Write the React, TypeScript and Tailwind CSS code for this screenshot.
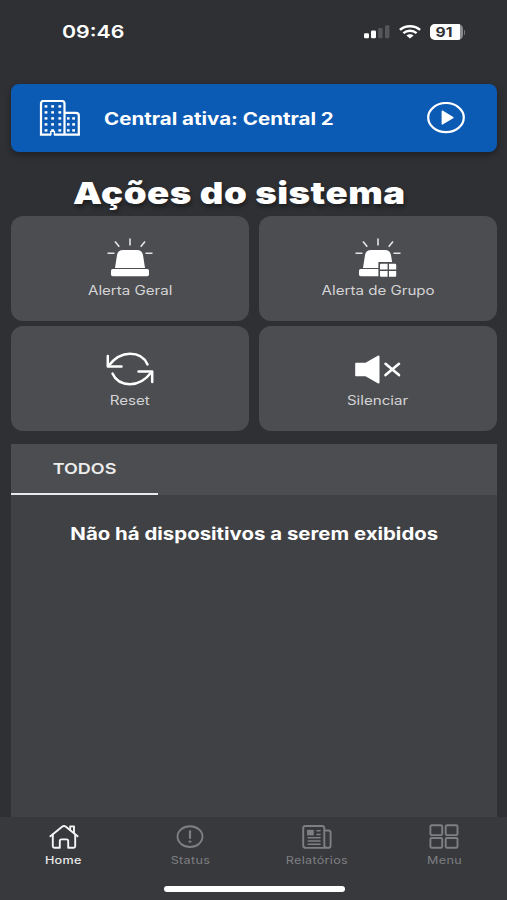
import type { ReactNode } from "react"

type LabelProps = {
    children: ReactNode
    className?: string
}

const Label = ({ children, className = "" }: LabelProps) => {
    return (
        <span className={`inline-block whitespace-nowrap scale-x-[1.2] ${className}`}>{children}</span>
    )
}

const SignalIcon = () => (
    <svg width="26" height="14" viewBox="0 0 26 14" fill="#fff">
        <rect x="0" y="8.3" width="5" height="5" rx="1.2" />
        <rect x="7" y="5.5" width="5" height="7.8" rx="1.2" />
        <rect x="14.2" y="3" width="4.4" height="10.3" rx="1.2" fill="#55565a" />
        <rect x="21" y="0.3" width="4.4" height="13" rx="1.2" fill="#55565a" />
    </svg>
)

const WifiIcon = () => (
    <svg width="22" height="14" viewBox="0 0 22 14" fill="none" stroke="#fff" strokeWidth="2.4">
        <path d="M0.9 4.9C6.4 0 15.6 0 21.1 4.9" />
        <path d="M4.4 8.1C8.1 5 13.9 5 17.6 8.1" />
        <path d="M7.4 10.5C9.4 8.7 12.6 8.7 14.6 10.5L11 13.6Z" fill="#fff" stroke="none" />
    </svg>
)

const Battery = () => (
    <div className="flex items-center">
        <div className="flex h-4 w-[33px] overflow-hidden rounded-[5px] bg-[#8b8c8e]">
            <div className="flex h-4 w-[30px] items-center justify-center bg-white">
                <Label className="text-[13px] font-bold leading-none text-[#2f3034]">91</Label>
            </div>
        </div>
        <div className="ml-px h-[5px] w-[1.5px] rounded-r bg-[#77787a]" />
    </div>
)

const BuildingIcon = () => {
    const rows = [6, 12, 18, 24, 30]
    return (
        <svg width="42" height="37" viewBox="0 0 42 37" fill="none" stroke="#fff" strokeWidth="2.2">
            <path d="M2 34.6V3.3Q2 0.9 5 0.9H22.5Q25.5 0.9 25.5 3.3V34.6" />
            <path d="M26 12.8H37Q39.8 12.8 39.8 15.4V34.6" />
            <path d="M0.9 34.6H12.2M15 34.6H40.9" />
            <path d="M11.8 35V31.4H15.4V35" strokeWidth="1.4" />
            <g fill="#fff" stroke="none">
                {rows.map((y) => (
                    <g key={y}>
                        <rect x="5.6" y={y - 0.8} width="2.8" height="2.4" />
                        <rect x="12.2" y={y - 0.8} width="2.8" height="2.4" />
                        <rect x="19.4" y={y - 0.8} width="2.8" height="2.4" />
                    </g>
                ))}
                {rows.slice(2).map((y) => (
                    <g key={y}>
                        <rect x="28" y={y - 0.8} width="2.6" height="2.4" />
                        <rect x="33.2" y={y - 0.8} width="2.8" height="2.4" />
                    </g>
                ))}
            </g>
        </svg>
    )
}

const PlayIcon = () => (
    <svg width="38" height="32" viewBox="0 0 38 32">
        <ellipse cx="19" cy="15.6" rx="17.8" ry="14.6" fill="none" stroke="#fff" strokeWidth="2.2" />
        <path d="M15.3 9.2L25.9 15.6L15.3 22Z" fill="#fff" stroke="#fff" strokeWidth="1.4" strokeLinejoin="round" />
    </svg>
)

const SirenIcon = ({ group = false }: { group?: boolean }) => (
    <svg width="46" height="40" viewBox="0 0 46 40">
        <path
            d="M23 1.5V8.5M8 4.5L12.3 9.7M38 4.5L33.7 9.7M0.5 16.3H7.5M38.5 16.3H45.5"
            stroke="#e4e4e5"
            strokeWidth="1.6"
            fill="none"
        />
        <path d="M8 31L10 18Q11 13 16 13H30Q35 13 36 18L38 31Z" fill="#fff" />
        <rect x="4" y="32" width="38" height="7.2" rx="1.8" fill="#fff" />
        {group && (
            <g>
                <rect x="23.4" y="25" width="20" height="15" fill="#4c4d50" />
                <path d="M26 26.8H32.6V32.4H25V27.8Q25 26.8 26 26.8ZM34 26.8H40.2Q41.2 26.8 41.2 27.8V32.4H34ZM25 34H32.6V39.8H26Q25 39.8 25 38.8ZM34 34H41.2V38.8Q41.2 39.8 40.2 39.8H34Z" fill="#fff" />
            </g>
        )}
    </svg>
)

const ResetIcon = () => (
    <svg className="mt-[3px]" width="48" height="34" viewBox="0 0 48 34" fill="none" stroke="#fff" strokeWidth="2.5" strokeLinecap="round" strokeLinejoin="round">
        <path d="M1.8 4V14.4H15.5" />
        <path d="M2.6 13.8C9 5.5 15.5 1.8 24 1.8C32 1.8 38.5 5.6 41.5 12.4" />
        <path d="M46.2 30V19.6H32.5" />
        <path d="M45.4 20.2C39 28.5 32.5 32.2 24 32.2C16 32.2 9.5 28.4 6.5 21.6" />
    </svg>
)

const MuteIcon = () => (
    <svg className="mr-px mt-[5px]" width="46" height="30" viewBox="0 0 46 30">
        <path d="M1 7.8H10.5L22.8 0.7Q24.5 0 24.5 1.7V27.3Q24.5 29 22.8 28.3L10.5 21.2H1Q0.2 21.2 0.2 20.4V8.6Q0.2 7.8 1 7.8Z" fill="#fff" />
        <path d="M30.5 8.8L44 20.1M44 8.8L30.5 20.1" stroke="#fff" strokeWidth="2.6" strokeLinecap="round" />
    </svg>
)

const HomeIcon = () => (
    <svg className="ml-0.5" width="30" height="24" viewBox="0 0 30 24" fill="none" stroke="#f5f5f6" strokeWidth="1.9" strokeLinejoin="round" strokeLinecap="round">
        <path d="M1.4 11.2L13.4 1.5Q15 0.6 16.6 1.5L28.6 11.2" />
        <path d="M3.8 9.8V21.3Q3.8 22.8 5.3 22.8H10.8V16Q10.8 14.4 12.4 14.4H17.6Q19.2 14.4 19.2 16V22.8H24.7Q26.2 22.8 26.2 21.3V9.8" />
        <path d="M21.2 4.6V1.4H25V8" />
    </svg>
)

const StatusIcon = () => (
    <svg width="28" height="24" viewBox="0 0 28 24" fill="none" stroke="#7e7f82">
        <ellipse cx="14" cy="11.6" rx="12.5" ry="10.4" strokeWidth="1.9" />
        <path d="M14 6.3V13" strokeWidth="2.2" strokeLinecap="round" />
        <ellipse cx="14" cy="16.6" rx="1.5" ry="1.2" fill="#7e7f82" stroke="none" />
    </svg>
)

const ReportIcon = () => (
    <svg className="ml-px" width="30" height="24" viewBox="0 0 30 24" fill="none" stroke="#7e7f82" strokeWidth="1.9" strokeLinecap="round">
        <path d="M22.3 5.5V3Q22.3 1 20.1 1H3.4Q1.2 1 1.2 3V20.5Q1.2 22.9 4 22.9H26Q22.3 22.9 22.3 20.2V5.5H26.3Q28.6 5.5 28.6 7.5V20.5Q28.6 22.9 26 22.9" />
        <rect x="6" y="5.8" width="4.8" height="3.6" fill="#7e7f82" />
        <path d="M15 5.8H18M15 9.6H18M6.2 12.8H18M6.2 16H18M6.2 19.2H18" strokeWidth="1.5" />
    </svg>
)

const MenuIcon = () => (
    <svg width="30" height="26" viewBox="0 0 30 26" fill="none" stroke="#7e7f82" strokeWidth="1.9">
        <rect x="1.4" y="1.3" width="11.8" height="9.8" rx="1.3" />
        <rect x="16.7" y="1.3" width="11.8" height="9.8" rx="1.3" />
        <rect x="1.4" y="14" width="11.8" height="9.8" rx="1.3" />
        <rect x="16.7" y="14" width="11.8" height="9.8" rx="1.3" />
    </svg>
)

const ActionCard = ({ icon, label }: { icon: ReactNode; label: string }) => {
    return (
        <button className="flex h-[105px] flex-col items-center rounded-xl bg-[#4c4d50] pt-[21px]">
            <div className="flex h-10 items-center justify-center">{icon}</div>
            <Label className="mt-1 text-[12.6px] leading-5 text-[#d4d4d6]">{label}</Label>
        </button>
    )
}

const NavItem = ({ icon, label, active = false }: { icon: ReactNode; label: string; active?: boolean }) => {
    return (
        <div className="flex flex-1 flex-col items-center pt-[7px]">
            <div className="flex h-[26px] items-center">{icon}</div>
            <Label className={`mt-[3px] text-[10.5px] leading-4 tracking-[0.25px] ${active ? "font-medium text-[#e8e8e9]" : "ml-px text-[#7e7f82]"}`}>
                {label}
            </Label>
        </div>
    )
}

const App = () => {
    return (
        <div className="flex h-[900px] w-[507px] flex-col overflow-hidden bg-[#2f3034] font-['Inter',sans-serif]">
            <header className="flex h-[84px] items-start justify-between pl-[62px] pr-[42px] pt-[22px]">
                <Label className="origin-left text-[17.8px] font-semibold leading-5 text-white">09:46</Label>
                <div className="flex h-5 items-center">
                    <SignalIcon />
                    <div className="ml-[9px] mr-[9px]"><WifiIcon /></div>
                    <Battery />
                </div>
            </header>

            <main className="flex flex-1 flex-col pl-[11px] pr-[10px]">
                <div className="flex h-[68px] items-center rounded-lg bg-[#0b5ab4] pl-7 pr-8 shadow-[0_3px_6px_rgba(0,0,0,0.35)]">
                    <BuildingIcon />
                    <Label className="ml-[23px] mt-0.5 origin-left text-[17.1px] font-bold text-white">Central ativa: Central 2</Label>
                    <div className="ml-auto"><PlayIcon /></div>
                </div>

                <h1 className="h-16 pl-[62px] pt-[23px]">
                    <Label className="origin-left text-[30.5px] font-black leading-9 tracking-[0.45px] text-white [text-shadow:1px_3px_4px_rgba(0,0,0,0.4)]">
                        Ações do sistema
                    </Label>
                </h1>

                <div className="grid grid-cols-2 gap-x-2.5 gap-y-[5px]">
                    <ActionCard icon={<SirenIcon />} label="Alerta Geral" />
                    <ActionCard icon={<SirenIcon group />} label="Alerta de Grupo" />
                    <ActionCard icon={<ResetIcon />} label="Reset" />
                    <ActionCard icon={<MuteIcon />} label="Silenciar" />
                </div>

                <section className="mt-[13px] flex flex-1 flex-col bg-[#404144]">
                    <div className="flex h-[51px] bg-[#4c4d50]">
                        <div className="flex w-[147px] items-center justify-center border-b-2 border-[#e9e9ea] pt-0.5">
                            <Label className="text-[15px] font-semibold text-[#ececed]">TODOS</Label>
                        </div>
                    </div>
                    <p className="mt-[27px] text-center">
                        <Label className="text-[17px] font-bold text-white">Não há dispositivos a serem exibidos</Label>
                    </p>
                </section>
            </main>

            <footer className="flex h-[83px] flex-col items-center bg-[#38393c]">
                <nav className="flex w-full">
                    <NavItem icon={<HomeIcon />} label="Home" active />
                    <NavItem icon={<StatusIcon />} label="Status" />
                    <NavItem icon={<ReportIcon />} label="Relatórios" />
                    <NavItem icon={<MenuIcon />} label="Menu" />
                </nav>
                <div className="mb-2 ml-px mt-auto h-[6px] w-[181px] rounded-full bg-white" />
            </footer>
        </div>
    )
}

export default App
